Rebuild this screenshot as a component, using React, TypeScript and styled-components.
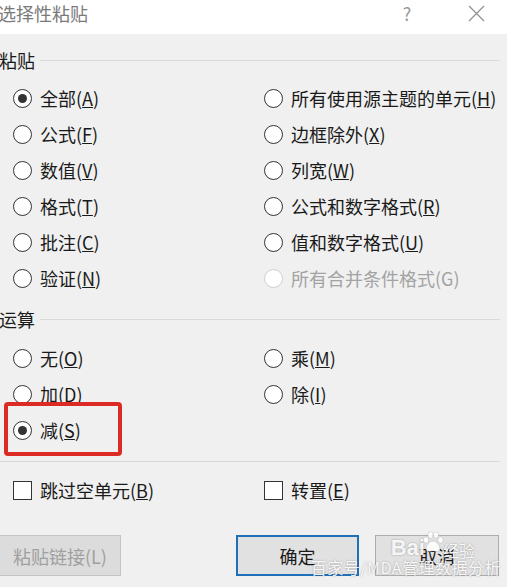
import React, { FC } from "react";
import styled, { createGlobalStyle } from "styled-components";

const GlobalStyle = createGlobalStyle`
  html, body {
    margin: 0;
    padding: 0;
    background: #f0f0f0;
  }
  body {
    font-family: "Noto Sans CJK SC", "Noto Sans", sans-serif;
    color: #1a1a1a;
  }
`;

const Dialog = styled.div`
  position: relative;
  width: 507px;
  height: 587px;
  overflow: hidden;
  background: #f0f0f0;
  display: flex;
  flex-direction: column;
`;

const TitleBar = styled.div`
  height: 34px;
  background: #ffffff;
  display: flex;
  align-items: flex-start;
  padding-top: 1px;
  box-sizing: border-box;
`;

const Title = styled.div`
  flex: 1;
  margin-left: -2px;
  font-size: 18px;
  line-height: 24px;
  color: #7a7a7a;
`;

const TitleButton = styled.div<{ w: number }>`
  width: ${({ w }) => w}px;
  display: flex;
  justify-content: center;
  font-size: 18px;
  line-height: 24px;
  color: #9a9a9a;
`;

const Heading = styled.div<{ top: number }>`
  display: flex;
  align-items: center;
  margin-top: ${({ top }) => top}px;
  height: 24px;
  font-size: 18px;
  padding-right: 7px;

  span {
    margin-left: -1px;
    margin-right: 5px;
  }
  &::after {
    content: "";
    flex: 1;
    height: 1px;
    background: #d9d9d9;
  }
`;

const Grid = styled.div<{ top: number }>`
  display: grid;
  grid-template-columns: 251px 1fr;
  grid-auto-rows: 36px;
  padding-left: 13px;
  margin-top: ${({ top }) => top}px;
`;

const Option = styled.div<{ disabled?: boolean }>`
  position: relative;
  display: flex;
  align-items: center;
  gap: 8px;
  font-size: 18px;
  color: ${({ disabled }) => (disabled ? "#a3a3a3" : "#1a1a1a")};
  white-space: nowrap;
`;

const Radio = styled.span<{ checked?: boolean; disabled?: boolean }>`
  width: 19px;
  height: 19px;
  box-sizing: border-box;
  border-radius: 50%;
  border: 1px solid ${({ disabled }) => (disabled ? "#cfcfcf" : "#333333")};
  background: #ffffff;
  display: flex;
  align-items: center;
  justify-content: center;
  flex: none;

  &::after {
    content: "";
    width: 9px;
    height: 9px;
    border-radius: 50%;
    background: #333333;
    display: ${({ checked }) => (checked ? "block" : "none")};
  }
`;

const Box = styled.span`
  width: 19px;
  height: 19px;
  box-sizing: border-box;
  border: 1px solid #333333;
  background: #ffffff;
  flex: none;
`;

const Highlight = styled.div`
  position: absolute;
  left: -9px;
  top: -10px;
  width: 118px;
  height: 54px;
  box-sizing: border-box;
  border: 4px solid #dc2b25;
  border-radius: 4px;
  pointer-events: none;
`;

const Divider = styled.div`
  height: 1px;
  margin: 13px 7px 0 0;
  background: #d9d9d9;
`;

const ButtonRow = styled.div`
  display: flex;
  margin-top: 27px;
`;

const Button = styled.div<{ variant?: "default" | "disabled" | "primary" }>`
  height: 41px;
  box-sizing: border-box;
  display: flex;
  align-items: center;
  justify-content: center;
  font-size: 18px;
  background: ${({ variant }) => (variant === "disabled" ? "#dcdcdc" : "#e1e1e1")};
  color: ${({ variant }) => (variant === "disabled" ? "#a0a0a0" : "#1a1a1a")};
  border: ${({ variant }) =>
    variant === "primary"
      ? "2px solid #1f70b8"
      : variant === "disabled"
        ? "1px solid #c4c4c4"
        : "1px solid #adadad"};
`;

const LinkButton = styled(Button)`
  width: 122px;
  margin-left: -1px;
`;

const OkButton = styled(Button)`
  width: 123px;
  margin-left: 115px;
`;

const CancelButton = styled(Button)`
  width: 124px;
  margin-left: 16px;
`;

const Watermark = styled.div`
  position: absolute;
  right: 6px;
  bottom: 10px;
  display: flex;
  flex-direction: column;
  align-items: flex-end;
  color: rgba(255, 255, 255, 0.92);
  text-shadow: 0 0 2px rgba(0, 0, 0, 0.35);
  pointer-events: none;
`;

const BrandLine = styled.div`
  display: flex;
  align-items: flex-end;
  margin-right: 26px;
  font-family: "Liberation Sans", Arial, sans-serif;
  font-size: 22px;
  font-weight: bold;
  line-height: 22px;

  small {
    font-family: "Noto Sans CJK SC", sans-serif;
    font-weight: normal;
    font-size: 16px;
    line-height: 18px;
    margin-left: 2px;
  }
`;

const Credit = styled.div`
  font-size: 16px;
  line-height: 20px;
  letter-spacing: 0.5px;
  margin-top: -2px;
`;

const Paw: FC = () => (
  <svg width="24" height="22" viewBox="0 0 24 22" style={{ margin: "0 -4px 6px -4px" }}>
    <g fill="rgba(255,255,255,0.9)" stroke="rgba(0,0,0,0.2)" strokeWidth="0.6">
      <ellipse cx="5" cy="9" rx="2.6" ry="3.2" />
      <ellipse cx="9.5" cy="4" rx="2.6" ry="3.2" />
      <ellipse cx="15" cy="4" rx="2.6" ry="3.2" />
      <ellipse cx="19.5" cy="9" rx="2.6" ry="3.2" />
      <path d="M12 10c-4 0-7 5-7 8 0 2.5 3 3 7 2 4 1 7 .5 7-2 0-3-3-8-7-8z" />
    </g>
  </svg>
);

type Item = { label: string; key: string; checked?: boolean; disabled?: boolean };

const Label: FC<{ item: Item }> = ({ item }) => (
  <span>
    {item.label}(
    {item.disabled ? item.key : <u>{item.key}</u>})
  </span>
);

const pasteItems: Item[] = [
  { label: "全部", key: "A", checked: true },
  { label: "所有使用源主题的单元", key: "H" },
  { label: "公式", key: "F" },
  { label: "边框除外", key: "X" },
  { label: "数值", key: "V" },
  { label: "列宽", key: "W" },
  { label: "格式", key: "T" },
  { label: "公式和数字格式", key: "R" },
  { label: "批注", key: "C" },
  { label: "值和数字格式", key: "U" },
  { label: "验证", key: "N" },
  { label: "所有合并条件格式", key: "G", disabled: true },
];

const opItems: (Item | null)[] = [
  { label: "无", key: "O" },
  { label: "乘", key: "M" },
  { label: "加", key: "D" },
  { label: "除", key: "I" },
  { label: "减", key: "S", checked: true },
  null,
];

export default function App() {
  return (
    <Dialog>
      <GlobalStyle />
      <TitleBar>
        <Title>选择性粘贴</Title>
        <TitleButton w={76}>?</TitleButton>
        <TitleButton w={62}>
          <svg width="17" height="17" viewBox="0 0 17 17" style={{ marginTop: 4 }}>
            <path d="M1 1L16 16M16 1L1 16" stroke="#8f8f8f" strokeWidth="1.2" />
          </svg>
        </TitleButton>
      </TitleBar>

      <Heading top={14}>
        <span>粘贴</span>
      </Heading>
      <Grid top={8}>
        {pasteItems.map((item) => (
          <Option key={item.key} disabled={item.disabled}>
            <Radio checked={item.checked} disabled={item.disabled} />
            <Label item={item} />
          </Option>
        ))}
      </Grid>

      <Heading top={11}>
        <span>运算</span>
      </Heading>
      <Grid top={9}>
        {opItems.map((item, i) =>
          item ? (
            <Option key={item.key}>
              <Radio checked={item.checked} />
              <Label item={item} />
              {item.key === "S" && <Highlight />}
            </Option>
          ) : (
            <div key={i} />
          ),
        )}
      </Grid>

      <Divider />

      <Grid top={10}>
        <Option>
          <Box />
          <span>
            跳过空单元(<u>B</u>)
          </span>
        </Option>
        <Option>
          <Box />
          <span>
            转置(<u>E</u>)
          </span>
        </Option>
      </Grid>

      <ButtonRow>
        <LinkButton variant="disabled">粘贴链接(L)</LinkButton>
        <OkButton variant="primary">确定</OkButton>
        <CancelButton>取消</CancelButton>
      </ButtonRow>

      <Watermark>
        <BrandLine>
          Bai
          <Paw />
          <small>经验</small>
        </BrandLine>
        <Credit>百家号/MDA管理数据分析</Credit>
      </Watermark>
    </Dialog>
  );
}
